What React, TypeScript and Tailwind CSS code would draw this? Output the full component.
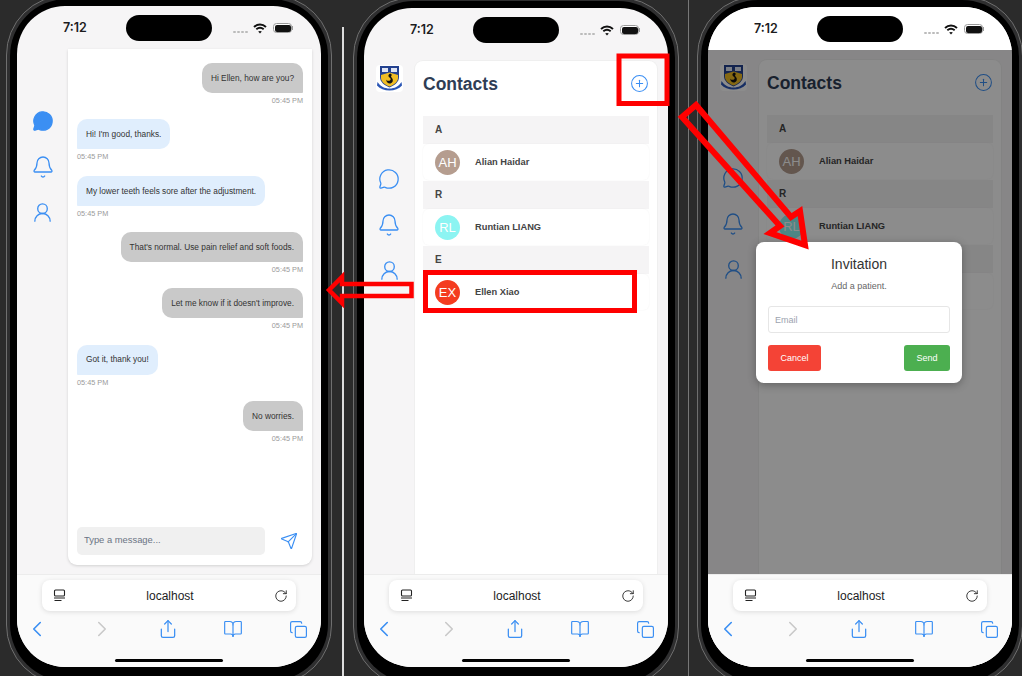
import React from "react";
import {
  Bell,
  BookOpen,
  ChevronLeft,
  ChevronRight,
  CirclePlus,
  Copy,
  MessageCircle,
  RotateCw,
  Send,
  Share,
  UserRound,
} from "lucide-react";

const FONT = { fontFamily: '"Liberation Sans", Arial, sans-serif' };

function StatusBar() {
  return (
    <div className="flex h-[43px] shrink-0 items-center pl-[46px] pt-[1px]">
      <span className="w-[63px] font-['Inter',sans-serif] text-[12.5px] font-semibold leading-none text-[#1c1c1e]">7:12</span>
      <div className="h-[26px] w-[86px] rounded-full bg-black" />
      <div className="ml-[21px] mt-[8px] flex gap-[1px]">
        {[0, 1, 2, 3].map((i) => (
          <span key={i} className="h-[2.5px] w-[3px] rounded-full bg-[#bbbbbb]" />
        ))}
      </div>
      <svg className="ml-[5px]" width="14" height="11" viewBox="0 0 14 11" fill="none" stroke="#111" strokeWidth="1.9">
        <path d="M1 4 C4.5 .6 9.5 .6 13 4" />
        <path d="M3.3 6.3 C5.5 4.4 8.5 4.4 10.7 6.3" />
        <path d="M7 10.6 L5.2 8.5 C6.2 7.7 7.8 7.7 8.8 8.5 Z" fill="#111" stroke="none" />
      </svg>
      <div className="ml-[6px] flex items-center">
        <div className="flex h-[10px] w-[19px] items-center justify-center rounded-[3.5px] border border-[#9a9a9a] bg-white">
          <div className="h-[7px] w-[16px] rounded-[2px] bg-[#111]" />
        </div>
        <div className="h-[4px] w-[1px] bg-[#9a9a9a]" />
      </div>
    </div>
  );
}

function Toolbar() {
  return (
    <div className="relative flex h-[93px] shrink-0 flex-col border-t border-[#ececec] bg-[#fafafa]">
      <div className="mx-[25px] mt-[5px] flex h-[31px] items-center justify-between rounded-[8px] bg-white pl-[11px] pr-[8px] shadow-[0_1px_5px_rgba(0,0,0,0.12)]">
        <svg width="13" height="13" viewBox="0 0 13 13" fill="none" stroke="#222" strokeWidth="1.1">
          <rect x="1.5" y="1" width="10" height="6" rx="1" />
          <path d="M1 9h11M1.500 11.500h7" />
        </svg>
        <span className="text-[12px] leading-none text-[#1c1c1e]">localhost</span>
        <RotateCw size={14} strokeWidth={1.5} color="#222" />
      </div>
      <div className="mt-[5px] flex items-center justify-between pl-[7px] pr-[10px] text-[#3b8ff3]">
        <span className="flex w-[26px] justify-center"><ChevronLeft size={26} strokeWidth={1.5} /></span>
        <span className="flex w-[26px] justify-center"><ChevronRight size={26} strokeWidth={1.5} className="text-[#c9c9c9]" /></span>
        <span className="flex w-[26px] justify-center"><Share size={20} strokeWidth={1.5} /></span>
        <span className="flex w-[26px] justify-center"><BookOpen size={20} strokeWidth={1.4} /></span>
        <span className="flex w-[26px] justify-center"><Copy size={19} strokeWidth={1.5} /></span>
      </div>
      <div className="absolute bottom-[5px] left-1/2 h-[3px] w-[108px] -translate-x-1/2 rounded-full bg-black" />
    </div>
  );
}

function Phone({ top, left, children }: { top: string; left: string; children: React.ReactNode }) {
  return (
    <div className={`${left} ${top} h-[690px] w-[326px] shrink-0 rounded-[60px] border border-[#6f6f6f] bg-[#2f2f30] p-[3px]`}>
      <div className="h-full rounded-[57px] bg-black p-[7px]">{children}</div>
    </div>
  );
}

function Screen({ height, children }: { height: string; children: React.ReactNode }) {
  return (
    <div className={`${height} flex flex-col overflow-hidden rounded-[48px] bg-[#f6f5f6] text-[#333]`} style={FONT}>
      {children}
    </div>
  );
}

function NavIcons({ active }: { active?: boolean }) {
  return (
    <>
      <MessageCircle size={22} strokeWidth={1.4} fill={active ? "currentColor" : "none"} />
      <Bell size={24} strokeWidth={1.3} className="mt-[23px]" />
      <UserRound size={23} strokeWidth={1.4} className="mt-[22px]" />
    </>
  );
}

function Crest() {
  return (
    <div className="flex h-[27px] w-[27px] items-center justify-center rounded-[4px] bg-white">
      <svg width="27" height="27" viewBox="0 0 27 27">
        <path d="M4 1h19v11c0 5-4 8-9.500 10.500C8 20 4 17 4 12z" fill="#23418f" />
        <rect x="6" y="3" width="6" height="4" fill="#dfe5f3" />
        <rect x="15" y="3" width="6" height="4" fill="#dfe5f3" />
        <path d="M5 10 L13.500 7.500 L22 10 V13 C22 16 19 19.500 13.500 21.500 C8 19.500 5 16 5 13Z" fill="#f0bd24" />
        <path d="M14.500 8.500c-2.500.5-2.500 3-1 4 1.500 1 1.500 2 .5 3-1.500.5-3.500.5-4-1 .5 3 2.500 4.500 4.500 4 2.500-1 3-3.500 1.500-5.500-1-1-1.500-2 0-3z" fill="#111" />
        <path d="M1.500 17c3 4.500 7 6.500 12 6.500s9-2 12-6.500l.5 3.500c-3 3.500-7.500 5-12.500 5S4 24 1 20.500z" fill="#2a55b5" />
      </svg>
    </div>
  );
}

type Msg = { text: string; me: boolean };
const messages: Msg[] = [
  { text: "Hi Ellen, how are you?", me: true },
  { text: "Hi! I'm good, thanks.", me: false },
  { text: "My lower teeth feels sore after the adjustment.", me: false },
  { text: "That's normal. Use pain relief and soft foods.", me: true },
  { text: "Let me know if it doesn't improve.", me: true },
  { text: "Got it, thank you!", me: false },
  { text: "No worries.", me: true },
];

function ChatScreen() {
  return (
    <Screen height="h-[661px]">
      <StatusBar />
      <div className="flex min-h-0 flex-1 pb-[9px]">
        <div className="flex w-[51px] shrink-0 flex-col items-center pt-[61px] text-[#3b8ff3]">
          <NavIcons active />
        </div>
        <div className="mr-[9px] flex min-w-0 flex-1 flex-col rounded-b-[9px] bg-white px-[9px] pt-[14px] shadow-[0_1px_3px_rgba(0,0,0,0.15)]">
          <div className="flex flex-1 flex-col">
            {messages.map((m, i) => (
              <div key={i} className={`mb-[13.33px] flex flex-col ${m.me ? "items-end" : "items-start"}`}>
                <div
                  className={`flex h-[30px] items-center rounded-[10px] px-[9px] text-[8.3px] leading-none text-[#333] ${
                    m.me ? "rounded-br-[1px] bg-[#c9c9c9]" : "rounded-bl-[1px] bg-[#e0eefd]"
                  }`}
                >
                  {m.text}
                </div>
                <div className="mt-[3px] h-[10px] text-[7.3px] leading-[10px] text-[#9a9a9a]">05:45 PM</div>
              </div>
            ))}
          </div>
          <div className="mb-[10px] flex items-center">
            <input
              readOnly
              placeholder="Type a message..."
              className="h-[28px] w-[188px] rounded-[5px] bg-[#f0f0f0] px-[7px] pb-[3px] text-[9.4px] outline-none placeholder:text-[#6b7484]"
            />
            <Send size={18} strokeWidth={1.5} className="ml-[15px] text-[#3b8ff3]" />
          </div>
        </div>
      </div>
      <Toolbar />
    </Screen>
  );
}

const contacts = [
  { letter: "A", initials: "AH", name: "Alian Haidar", color: "bg-[#b59d8f]" },
  { letter: "R", initials: "RL", name: "Runtian LIANG", color: "bg-[#8cf4f2]" },
  { letter: "E", initials: "EX", name: "Ellen Xiao", color: "bg-[#f43c1f]" },
];

function ContactsBody() {
  return (
    <>
      <div className="flex w-[50px] shrink-0 flex-col items-center pt-[5px] text-[#3b8ff3]">
        <Crest />
        <div className="mt-[76px] flex flex-col items-center">
          <NavIcons />
        </div>
      </div>
      <div className="mr-[10px] flex min-w-0 flex-1 flex-col rounded-t-[9px] border border-b-0 border-[#efefef] bg-white px-[8px]">
        <div className="mb-[9px] flex h-[46px] shrink-0 items-center justify-between">
          <h1 className="mt-[2px] text-[17.5px] font-bold leading-none text-[#2f3d55]">Contacts</h1>
          <CirclePlus size={19} strokeWidth={1.3} className="mb-[2px] text-[#3b8ff3]" />
        </div>
        {contacts.map((c) => (
          <div key={c.letter}>
            <div className="flex h-[28px] items-center bg-[#f5f4f5] pl-[12px] text-[10px] font-bold leading-none text-[#444]">{c.letter}</div>
            <div className="mb-[1px] flex h-[36px] items-center rounded-[6px] bg-white pl-[12px] shadow-[0_0_2px_rgba(0,0,0,0.06)]">
              <div className={`flex h-[25px] w-[25px] items-center justify-center rounded-full text-[13px] leading-none text-white ${c.color}`}>{c.initials}</div>
              <span className="ml-[15px] mt-[2px] text-[9.3px] font-bold leading-none text-[#444]">{c.name}</span>
            </div>
          </div>
        ))}
      </div>
    </>
  );
}

function ContactsScreen() {
  return (
    <Screen height="h-[659px]">
      <StatusBar />
      <div className="flex min-h-0 flex-1 pt-[9px]">
        <ContactsBody />
      </div>
      <Toolbar />
    </Screen>
  );
}

function InviteScreen() {
  return (
    <Screen height="h-[660px]">
      <div className="bg-white">
        <StatusBar />
      </div>
      <div className="relative flex min-h-0 flex-1 pt-[9px]">
        <ContactsBody />
        <div className="absolute inset-0 bg-black/45" />
        <div className="absolute left-[48px] top-[192px] flex h-[141px] w-[206px] flex-col rounded-[8px] bg-white px-[12px] pt-[14px] shadow-[0_2px_8px_rgba(0,0,0,0.3)]">
          <div className="text-center text-[14px] leading-[16px] text-[#333]">Invitation</div>
          <div className="mt-[9px] text-center text-[9px] leading-[10px] text-[#666]">Add a patient.</div>
          <input
            readOnly
            placeholder="Email"
            className="mt-[15px] h-[27px] w-full shrink-0 rounded-[3px] border border-[#e6e6e6] px-[6px] text-[9px] outline-none placeholder:text-[#9ca3af]"
          />
          <div className="mt-[12px] flex justify-between">
            <div className="flex h-[26px] w-[53px] items-center justify-center rounded-[3px] bg-[#f44336] text-[9px] leading-none text-white">Cancel</div>
            <div className="flex h-[26px] w-[46px] items-center justify-center rounded-[3px] bg-[#4caf50] text-[9px] leading-none text-white">Send</div>
          </div>
        </div>
      </div>
      <div className="bg-white">
        <Toolbar />
      </div>
    </Screen>
  );
}

function Annotations() {
  return (
    <svg className="pointer-events-none absolute left-0 top-0" width="1022" height="676" viewBox="0 0 1022 676" fill="none" stroke="#ff0000" strokeWidth="5" strokeLinejoin="miter">
      <rect x="619" y="56" width="48" height="47.500" />
      <rect x="425.500" y="272.500" width="209" height="38" />
      <polygon points="329,290 342,277 342,284 411.500,284 411.500,296 342,296 342,303" strokeWidth="4.500" />
      <polygon points="696,105 682,117 780,226 770,233 805,245 800,211 791,217" strokeWidth="6" />
    </svg>
  );
}

export default function App() {
  return (
    <div className="relative flex h-[676px] w-[1022px] overflow-hidden bg-[#2b2b2b]">
      <div className="w-[342px] shrink-0">
        <Phone left="ml-[6px]" top="-mt-[5px]">
          <ChatScreen />
        </Phone>
      </div>
      <div className="mt-[27px] h-full w-[2px] shrink-0 bg-[#dddddd]" />
      <div className="w-[344px] shrink-0">
        <Phone left="ml-[9px]" top="-mt-[3px]">
          <ContactsScreen />
        </Phone>
      </div>
      <div className="h-full w-[1px] shrink-0 bg-[#777777]" />
      <div className="flex-1">
        <Phone left="ml-[8px]" top="-mt-[4px]">
          <InviteScreen />
        </Phone>
      </div>
      <Annotations />
    </div>
  );
}
